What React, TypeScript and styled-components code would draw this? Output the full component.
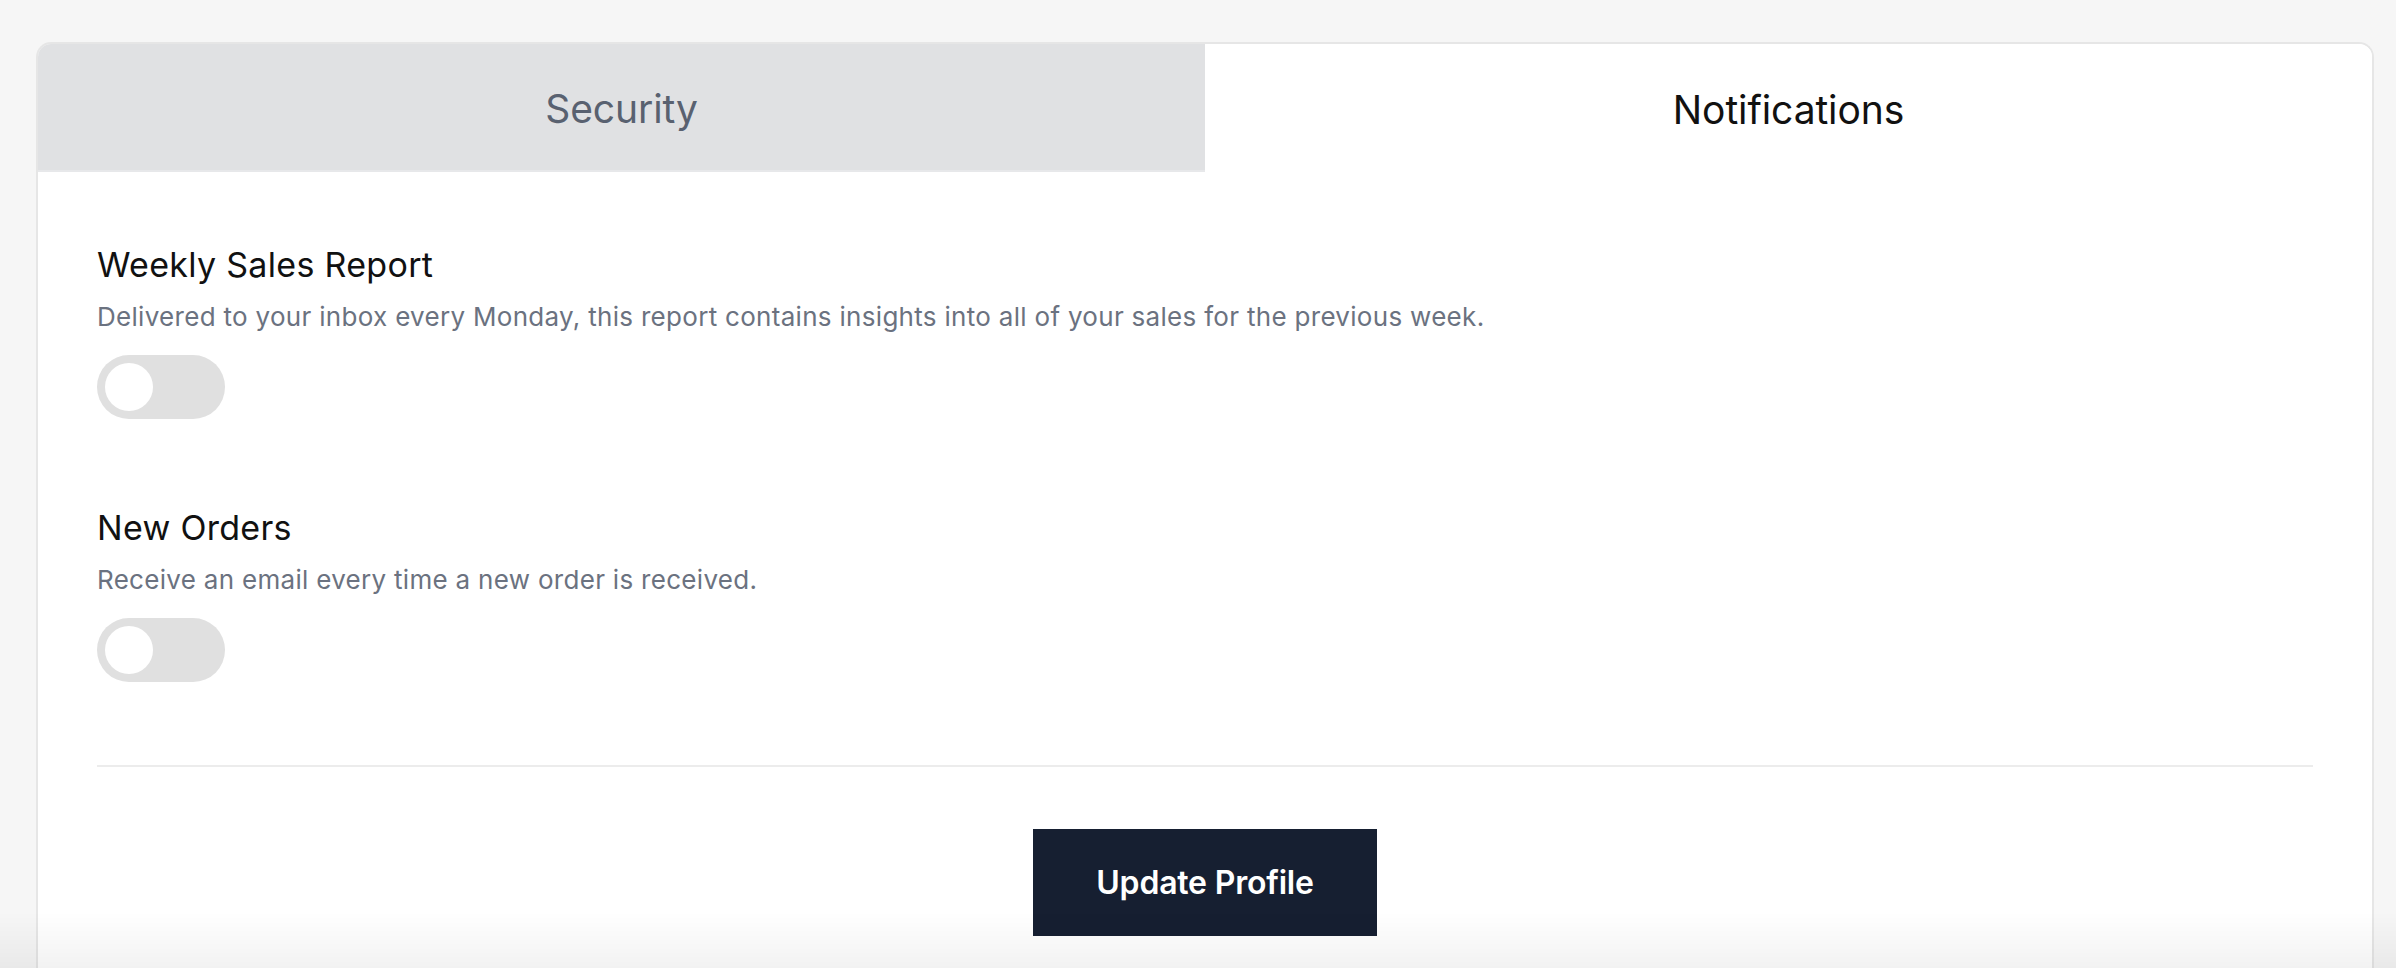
import React, { useState } from "react";
import styled, { createGlobalStyle } from "styled-components";

const GlobalStyle = createGlobalStyle`
  html, body {
    margin: 0;
    padding: 0;
    background: #f6f6f6;
    font-family: Inter, "Noto Sans", "Liberation Sans", sans-serif;
  }
  * { box-sizing: border-box; }
`;

const Page = styled.div`
  padding: 42px 22px 0 36px;
  min-height: 968px;
`;

const Card = styled.div`
  background: #ffffff;
  border: 2px solid #e6e6e6;
  border-bottom: none;
  border-radius: 15px 15px 0 0;
  overflow: hidden;
  min-height: 960px;
`;

const TabBar = styled.div`
  display: grid;
  grid-template-columns: 1fr 1fr;
  height: 128px;
`;

const Tab = styled.button<{ $active?: boolean }>`
  border: none;
  margin: 0;
  padding: 0;
  cursor: pointer;
  font-family: inherit;
  font-size: 39px;
  font-weight: 400;
  letter-spacing: -0.1px;
  display: flex;
  align-items: center;
  justify-content: center;
  padding-top: 2px;
  background: ${(p) => (p.$active ? "#ffffff" : "#e0e1e3")};
  color: ${(p) => (p.$active ? "#111111" : "#596170")};
  border-bottom: ${(p) => (p.$active ? "none" : "2px solid #e7e8ea")};
`;

const Content = styled.div`
  padding: 75px 59px 0 59px;
`;

const Setting = styled.section`
  display: flex;
  flex-direction: column;
  align-items: flex-start;
  & + & {
    margin-top: 91px;
  }
`;

const Title = styled.h3`
  margin: 0;
  font-size: 34px;
  line-height: 36px;
  font-weight: 400;
  color: #111111;
  letter-spacing: 0.3px;
`;

const Description = styled.p`
  margin: 16px 0 0;
  font-size: 26px;
  line-height: 36px;
  color: #6b7280;
  letter-spacing: 0.3px;
`;

const Track = styled.button<{ $on?: boolean }>`
  margin-top: 20px;
  width: 128px;
  height: 64px;
  border: none;
  padding: 0;
  border-radius: 32px;
  background: ${(p) => (p.$on ? "#161f31" : "#e0e0e0")};
  position: relative;
  cursor: pointer;
`;

const Knob = styled.span<{ $on?: boolean }>`
  position: absolute;
  top: 8px;
  left: ${(p) => (p.$on ? "72px" : "8px")};
  width: 48px;
  height: 48px;
  border-radius: 50%;
  background: #ffffff;
  transition: left 0.15s ease;
`;

const Divider = styled.hr`
  margin: 83px 0 0;
  border: none;
  height: 2px;
  background: #ececec;
`;

const Actions = styled.div`
  display: flex;
  justify-content: center;
  padding-top: 62px;
`;

const PrimaryButton = styled.button`
  width: 344px;
  height: 107px;
  border: none;
  background: #161f31;
  color: #ffffff;
  font-family: inherit;
  font-size: 32px;
  font-weight: 600;
  letter-spacing: -0.2px;
  cursor: pointer;
`;

const BottomFade = styled.div`
  position: fixed;
  left: 0;
  right: 0;
  bottom: 0;
  height: 56px;
  pointer-events: none;
  background: linear-gradient(to bottom, rgba(0,0,0,0), rgba(0,0,0,0.05));
`;

type Item = { title: string; description: string };

const items: Item[] = [
  {
    title: "Weekly Sales Report",
    description:
      "Delivered to your inbox every Monday, this report contains insights into all of your sales for the previous week.",
  },
  {
    title: "New Orders",
    description: "Receive an email every time a new order is received.",
  },
];

export default function App() {
  const [tab, setTab] = useState<"security" | "notifications">("notifications");
  const [state, setState] = useState<boolean[]>([false, false]);

  return (
    <>
      <GlobalStyle />
      <Page>
        <Card>
          <TabBar>
            <Tab $active={tab === "security"} onClick={() => setTab("security")}>
              Security
            </Tab>
            <Tab $active={tab === "notifications"} onClick={() => setTab("notifications")}>
              Notifications
            </Tab>
          </TabBar>
          <Content>
            {items.map((it, i) => (
              <Setting key={it.title}>
                <Title>{it.title}</Title>
                <Description>{it.description}</Description>
                <Track
                  $on={state[i]}
                  aria-pressed={state[i]}
                  onClick={() => setState((s) => s.map((v, j) => (j === i ? !v : v)))}
                >
                  <Knob $on={state[i]} />
                </Track>
              </Setting>
            ))}
            <Divider />
            <Actions>
              <PrimaryButton>Update Profile</PrimaryButton>
            </Actions>
          </Content>
        </Card>
      </Page>
      <BottomFade />
    </>
  );
}
